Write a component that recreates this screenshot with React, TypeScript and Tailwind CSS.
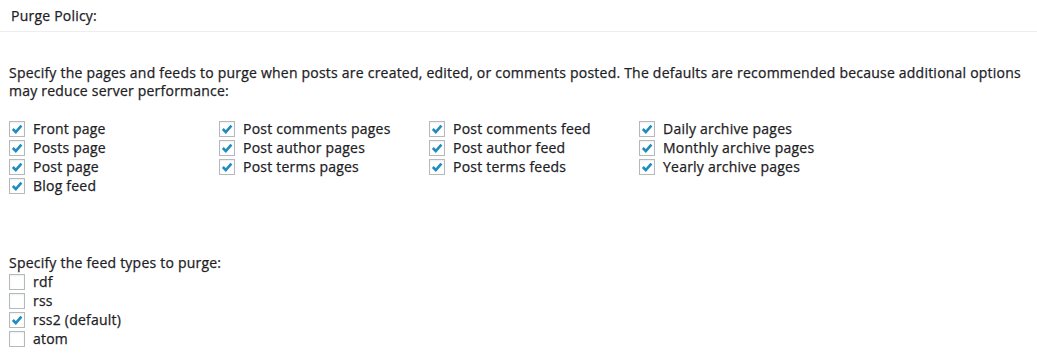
import React from 'react';

const Check: React.FC<{ checked: boolean }> = ({ checked }) => (
  <span className="flex h-4 w-4 shrink-0 items-center justify-center border border-[#b4b9be] bg-white shadow-[inset_0_1px_2px_rgba(0,0,0,0.07)]">
    {checked && (
      <svg width="14" height="14" viewBox="0 0 14 14">
        <path d="M2.8 7 L5.8 10 L11.4 3.6" fill="none" stroke="#1e8cbe" strokeWidth="2.6" />
      </svg>
    )}
  </span>
);

const Row: React.FC<{ label: string; checked?: boolean }> = ({ label, checked = true }) => (
  <label className="flex h-[19px] items-center gap-2">
    <Check checked={checked} />
    <span>{label}</span>
  </label>
);

const columns = [
  ['Front page', 'Posts page', 'Post page', 'Blog feed'],
  ['Post comments pages', 'Post author pages', 'Post terms pages'],
  ['Post comments feed', 'Post author feed', 'Post terms feeds'],
  ['Daily archive pages', 'Monthly archive pages', 'Yearly archive pages'],
];

const feeds = [
  { label: 'rdf', checked: false },
  { label: 'rss', checked: false },
  { label: 'rss2 (default)', checked: true },
  { label: 'atom', checked: false },
];

export default function App() {
  return (
    <div className="h-[360px] w-[1037px] bg-white font-['Open_Sans',sans-serif] text-[14px] tracking-[0.22px] text-[#1d2125] [-webkit-text-stroke:0.25px_#1d2125]">
      <div className="flex h-[32px] items-center border-b border-[#eeeeee] px-[11px] pb-[1px]">
        Purge Policy:
      </div>
      <div className="px-[9px] pt-[32px]">
        <p className="leading-[18px]">
          Specify the pages and feeds to purge when posts are created, edited, or comments posted. The defaults are
          recommended because additional options may reduce server performance:
        </p>
        <div className="mt-[19px] grid grid-cols-[210px_210px_210px_210px]">
          {columns.map((col, i) => (
            <div key={i} className="flex flex-col">
              {col.map((l) => (
                <Row key={l} label={l} />
              ))}
            </div>
          ))}
        </div>
        <p className="mt-[59px] leading-[18px]">Specify the feed types to purge:</p>
        <div className="flex flex-col">
          {feeds.map((f) => (
            <Row key={f.label} label={f.label} checked={f.checked} />
          ))}
        </div>
      </div>
    </div>
  );
}
